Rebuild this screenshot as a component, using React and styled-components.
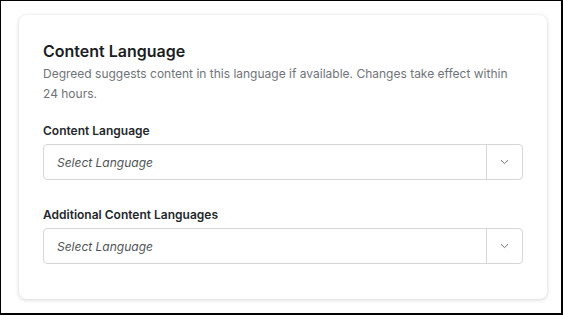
import React from "react";
import styled, { createGlobalStyle } from "styled-components";

const Global = createGlobalStyle`
  body {
    margin: 0;
    background: #fff;
    font-family: Inter, "Noto Sans", sans-serif;
  }
`;

const Frame = styled.div`
  box-sizing: border-box;
  width: 563px;
  height: 315px;
  border: 1px solid #000;
  border-right-width: 2px;
  border-bottom-width: 2px;
  padding: 14px 15px 0 18px;
`;

const Card = styled.section`
  box-sizing: border-box;
  width: 528px;
  background: #fff;
  border-radius: 7px;
  box-shadow: 0 1px 4px rgba(0, 0, 0, 0.16), 0 0 1px rgba(0, 0, 0, 0.08);
  padding: 24px 24px 35px 24px;
`;

const Title = styled.h2`
  margin: 0;
  font-size: 16px;
  line-height: 24px;
  font-weight: 600;
  color: #1b1e22;
`;

const Description = styled.p`
  margin: 1px 0 0;
  font-size: 12px;
  line-height: 20px;
  color: #6f747a;
`;

const Field = styled.div`
  margin-top: ${(p) => p.$top}px;
`;

const Label = styled.label`
  display: block;
  font-size: 12px;
  line-height: 18px;
  font-weight: 600;
  color: #24282c;
  margin-bottom: 4px;
`;

const Select = styled.div`
  box-sizing: border-box;
  display: flex;
  height: 36px;
  border: 1px solid #d4d7da;
  border-radius: 4px;
  background: #fff;
`;

const Placeholder = styled.span`
  flex: 1;
  display: flex;
  align-items: center;
  padding-left: 13px;
  font-size: 12px;
  font-style: italic;
  color: #4f5459;
`;

const Toggle = styled.span`
  width: 35px;
  display: flex;
  align-items: center;
  justify-content: center;
  border-left: 1px solid #d4d7da;
`;

const Chevron = () => (
  <svg width="9" height="6" viewBox="0 0 9 6" fill="none">
    <path d="M1 1.2 4.5 4.6 8 1.2" stroke="#6f747a" strokeWidth="1" />
  </svg>
);

const LanguageSelect = ({ label, top }) => (
  <Field $top={top}>
    <Label>{label}</Label>
    <Select>
      <Placeholder>Select Language</Placeholder>
      <Toggle>
        <Chevron />
      </Toggle>
    </Select>
  </Field>
);

export default function App() {
  return (
    <>
      <Global />
      <Frame>
        <Card>
          <Title>Content Language</Title>
          <Description>
            Degreed suggests content in this language if available. Changes
            take effect within 24 hours.
          </Description>
          <LanguageSelect label="Content Language" top={18} />
          <LanguageSelect label="Additional Content Languages" top={26} />
        </Card>
      </Frame>
    </>
  );
}
